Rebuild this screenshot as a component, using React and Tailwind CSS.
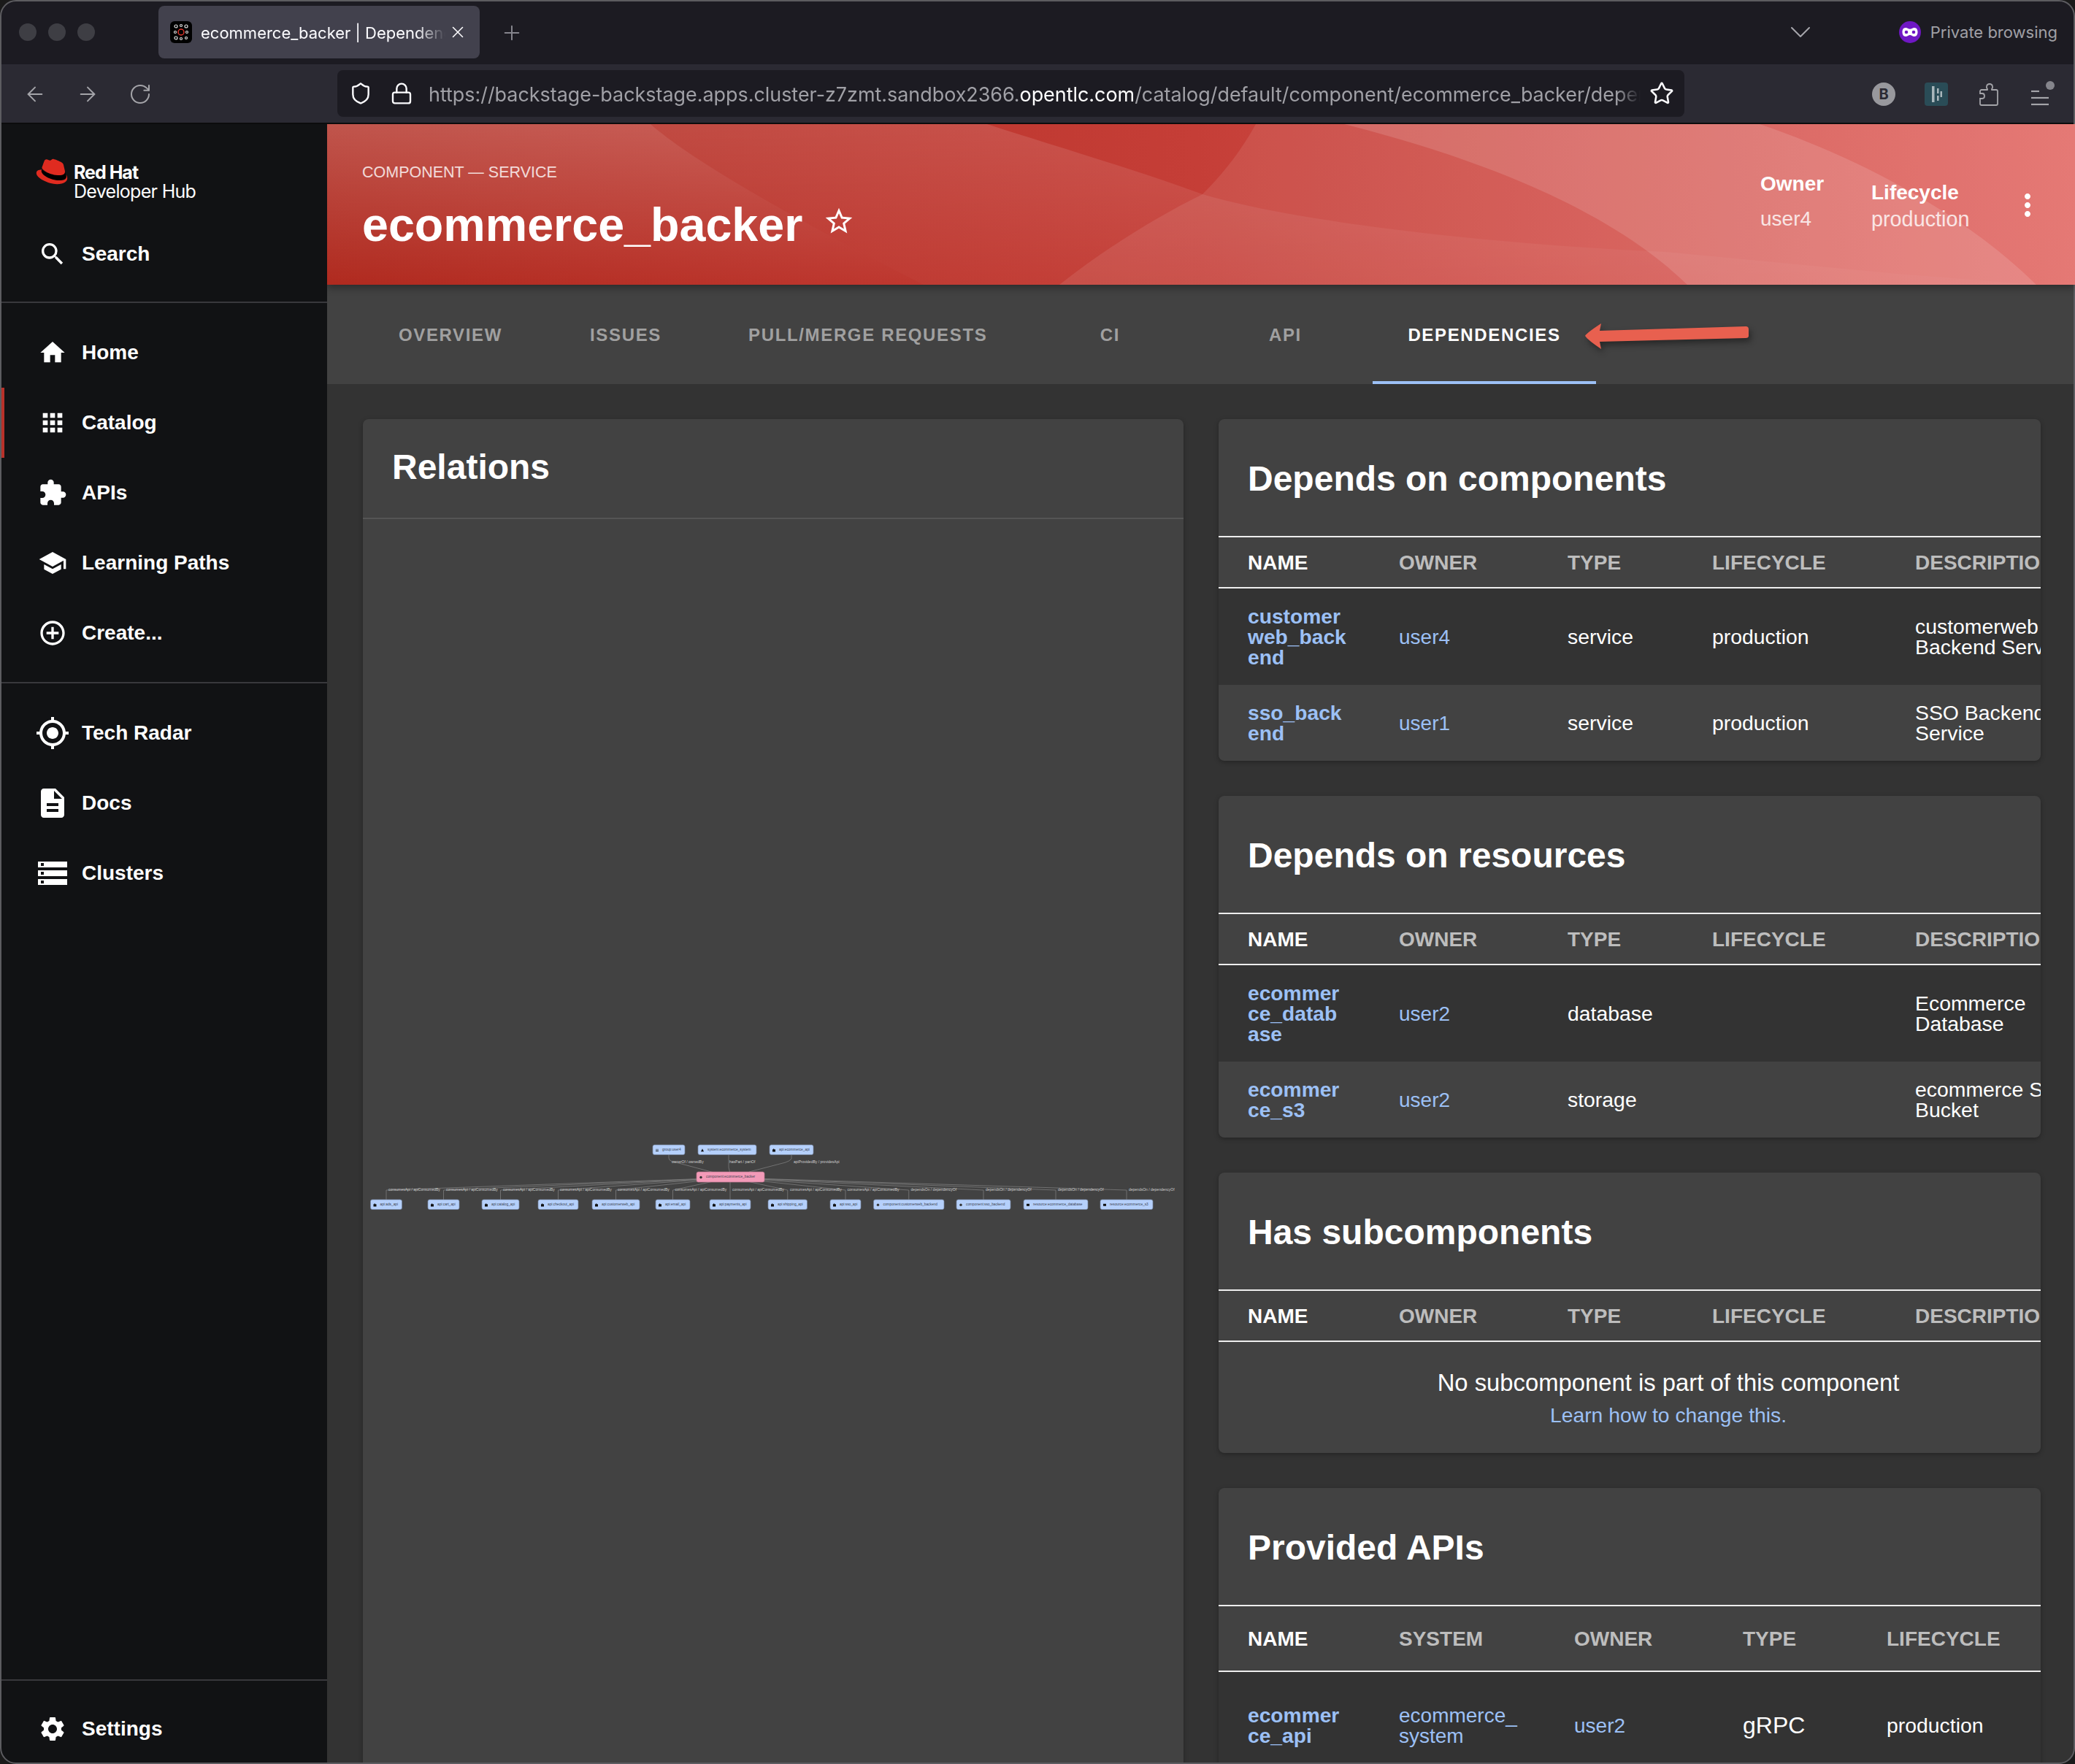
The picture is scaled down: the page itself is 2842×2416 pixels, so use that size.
import { ArrowLeft, ArrowRight, ChevronDown, Lock, Plus, RotateCw, Shield, Star, X } from 'lucide-react';
import {
  MdAddCircleOutline,
  MdApps,
  MdDescription,
  MdExtension,
  MdHome,
  MdMoreVert,
  MdMyLocation,
  MdSchool,
  MdSearch,
  MdSettings,
  MdStarBorder,
  MdStorage,
} from 'react-icons/md';

const mainNav = [
  { label: 'Home', icon: MdHome, size: 40 },
  { label: 'Catalog', icon: MdApps, size: 40, active: true },
  { label: 'APIs', icon: MdExtension, size: 40 },
  { label: 'Learning Paths', icon: MdSchool, size: 40 },
  { label: 'Create...', icon: MdAddCircleOutline, size: 40 },
];

const toolNav = [
  { label: 'Tech Radar', icon: MdMyLocation, size: 48 },
  { label: 'Docs', icon: MdDescription, size: 48 },
  { label: 'Clusters', icon: MdStorage, size: 48 },
];

const tabs = ['OVERVIEW', 'ISSUES', 'PULL/MERGE REQUESTS', 'CI', 'API', 'DEPENDENCIES'];

const componentCols = ['NAME', 'OWNER', 'TYPE', 'LIFECYCLE', 'DESCRIPTION'];
const componentGrid = 'grid grid-cols-[207px_231px_198px_278px_260px] pl-[40px]';
const apiGrid = 'grid grid-cols-[207px_240px_231px_197px_260px] pl-[40px]';

// graph, in page coordinates
const topNodes = [
  { x: 894, w: 44, text: 'group:user4', kind: 'group' },
  { x: 956, w: 80, text: 'system:ecommerce_system', kind: 'system' },
  { x: 1054, w: 60, text: 'api:ecommerce_api', kind: 'api' },
];

const bottomNodes = [
  { x: 507.5, w: 43, text: 'api:ads_api', kind: 'api', lx: 532 },
  { x: 586, w: 43, text: 'api:cart_api', kind: 'api', lx: 611 },
  { x: 660, w: 51, text: 'api:catalog_api', kind: 'api', lx: 689 },
  { x: 737, w: 55, text: 'api:checkout_api', kind: 'api', lx: 767 },
  { x: 811, w: 65, text: 'api:customerweb_api', kind: 'api', lx: 846 },
  { x: 898, w: 47, text: 'api:email_api', kind: 'api', lx: 924.5 },
  { x: 972, w: 56, text: 'api:payments_api', kind: 'api', lx: 1003 },
  { x: 1052, w: 53.5, text: 'api:shipping_api', kind: 'api', lx: 1082 },
  { x: 1137, w: 42, text: 'api:sso_api', kind: 'api', lx: 1160.6 },
  { x: 1196.5, w: 96.5, text: 'component:customerweb_backend', kind: 'component', lx: 1247.6, dep: true },
  { x: 1310, w: 74, text: 'component:sso_backend', kind: 'component', lx: 1350, dep: true },
  { x: 1402, w: 88, text: 'resource:ecommerce_database', kind: 'resource', lx: 1449, dep: true },
  { x: 1507, w: 72, text: 'resource:ecommerce_s3', kind: 'resource', lx: 1546, dep: true },
];

const NavItem = ({ item }) => {
  const Icon = item.icon;
  return (
    <div className="relative flex h-[96px] items-center gap-[16px] pl-[48px]">
      {item.active && <div className="absolute left-[2px] top-0 h-full w-[4px] bg-[#b8312a]" />}
      <div className="flex w-[48px] justify-center">
        <Icon size={item.size} color="#fff" />
      </div>
      <span className="text-[28px] font-bold text-white">{item.label}</span>
    </div>
  );
};

const RedHatLogo = () => (
  <svg width="46" height="36" viewBox="0 0 40 34" className="mt-[-1px] shrink-0">
    <path fill="#000" d="M6.900 14.300c-.3.600-.4 1.200-.4 1.900 0 4.800 10.800 12.100 23.300 12.100 5.500 0 8.700-2.100 8.700-4.800 0-.8-.2-1.500-.5-2.200L37 17c0 3.800-3.700 4.800-7 4.800C16.700 21.800 7.200 14.700 6.900 14.300z" />
    <path fill="#e02b20" d="M30 21.800c3.300 0 7-.9 7-4.800 0-.3 0-.6-.1-.9l-1.800-7.800c-.4-1.600-.8-2.500-4.100-4.100C28.500 2.900 23 .7 21.400.7c-1.500 0-2 2-3.700 2-1.700 0-3-1.500-4.600-1.500-1.600 0-2.600 1-3.300 3.300 0 0-2.200 6.100-2.500 7-.1.200-.1.400-.1.500 0 2.400 9.500 9.800 22.800 9.800zM38.400 20.900c.3 1 .5 1.700.5 2.600 0 3.500-3.700 4.800-9.100 4.800C17.300 28.300 6.500 21 6.500 16.200c0-.7.1-1.300.4-1.900C2.500 14.500 0 15.700 0 19.100 0 25 14.900 33.200 26.800 33.200c9.100 0 13.200-4.100 13.200-7.300 0-2.500-.6-3.800-1.600-5z" />
  </svg>
);

const Sidebar = () => (
  <aside className="flex w-[448px] shrink-0 flex-col bg-[#111214]">
    <div className="h-[245px] border-b-2 border-[#38383c]">
      <div className="flex h-[130px] gap-[7px] pl-[48px] pt-[48px]">
        <RedHatLogo />
        <div className="mt-[5px] font-['Inter',sans-serif] text-white">
          <div className="text-[25px] font-bold leading-[26px] tracking-[-1px]">Red Hat</div>
          <div className="text-[25px] leading-[26px] tracking-[-0.700px]">Developer Hub</div>
        </div>
      </div>
      <NavItem item={{ label: 'Search', icon: MdSearch, size: 40 }} />
    </div>
    <div className="border-b-2 border-[#38383c] pb-[19px] pt-[20px]">
      {mainNav.map((item) => (
        <NavItem key={item.label} item={item} />
      ))}
    </div>
    <div className="flex-1 pt-[20px]">
      {toolNav.map((item) => (
        <NavItem key={item.label} item={item} />
      ))}
    </div>
    <div className="h-[116px] border-t-2 border-[#38383c] pt-[18px]">
      <NavItem item={{ label: 'Settings', icon: MdSettings, size: 40 }} />
    </div>
  </aside>
);

const BrowserChrome = () => (
  <div className="font-['Inter',sans-serif]">
    {/* tab strip */}
    <div className="flex h-[88px] items-center bg-[#1c1b22] text-[#fbfbfe]">
      <div className="flex w-[217px] shrink-0 gap-[16px] pl-[26px]">
        <div className="h-[24px] w-[24px] rounded-full bg-[#3e3e44]" />
        <div className="h-[24px] w-[24px] rounded-full bg-[#3e3e44]" />
        <div className="h-[24px] w-[24px] rounded-full bg-[#3e3e44]" />
      </div>
      <div className="flex h-[72px] w-[440px] items-center rounded-[8px] bg-[#42414d] pl-[16px]">
        <svg width="30" height="30" viewBox="0 0 30 30" className="shrink-0">
          <rect width="30" height="30" rx="6" fill="#000" />
          <circle cx="15" cy="15" r="4" fill="none" stroke="#e0352b" strokeWidth="1.500" />
          <g fill="none" stroke="#ddd" strokeWidth="1.200">
            <circle cx="8" cy="7" r="2" />
            <circle cx="15" cy="6" r="1.500" />
            <circle cx="22" cy="7" r="2" />
            <circle cx="7" cy="15" r="1.500" />
            <circle cx="23" cy="15" r="1.500" />
            <circle cx="8" cy="23" r="2" />
            <circle cx="15" cy="24" r="1.500" />
            <circle cx="22" cy="23" r="1.500" />
          </g>
        </svg>
        <div className="ml-[12px] w-[335px] overflow-hidden whitespace-nowrap pt-[2px] text-[22px] [mask-image:linear-gradient(to_right,black_88%,transparent)]">
          ecommerce_backer | Dependencies
        </div>
        <X size={26} strokeWidth={1.5} className="ml-[4px]" />
      </div>
      <Plus size={32} strokeWidth={1.5} className="ml-[28px] mt-[2px] text-[#85858d]" />
      <div className="flex-1" />
      <ChevronDown size={48} strokeWidth={1} className="mr-[111px] text-[#a5a5ab]" />
      <svg width="30" height="30" viewBox="0 0 30 30" className="shrink-0">
        <circle cx="15" cy="15" r="15" fill="#6f17c4" />
        <path fill="#fff" d="M9 9c2.500 0 4 1.800 6 1.800S18.500 9 21 9c3.300 0 4.500 2.800 4.500 6S24 21 21 21c-2.500 0-4-2-6-2s-3.500 2-6 2c-3 0-4.500-2.800-4.500-6S5.700 9 9 9z" />
        <circle cx="10" cy="15" r="2.300" fill="#6f17c4" />
        <circle cx="20" cy="15" r="2.300" fill="#6f17c4" />
      </svg>
      <span className="ml-[13px] mr-[24px] whitespace-nowrap text-[22px] text-[#a0a0a6]">Private browsing</span>
    </div>
    {/* toolbar */}
    <div className="flex h-[80px] items-center bg-[#2b2a33] text-[#a4a4a9]">
      <div className="flex w-[462px] shrink-0 items-center gap-[40px] pl-[32px] pt-[2px]">
        <ArrowLeft size={32} strokeWidth={1.5} />
        <ArrowRight size={32} strokeWidth={1.5} />
        <RotateCw size={32} strokeWidth={1.5} />
      </div>
      <div className="flex h-[64px] w-[1845px] items-center rounded-[8px] bg-[#1c1b22] pl-[16px] text-[#fbfbfe]">
        <Shield size={32} strokeWidth={1.8} className="shrink-0" />
        <Lock size={32} strokeWidth={1.8} className="ml-[24px] shrink-0" />
        <div className="ml-[21px] w-[1660px] overflow-hidden whitespace-nowrap pt-[2px] text-[26.900px] text-[#a0a0a6] [mask-image:linear-gradient(to_right,black_98%,transparent)]">
          https://backstage-backstage.apps.cluster-z7zmt.sandbox2366.<span className="text-white">opentlc.com</span>/catalog/default/component/ecommerce_backer/dependencies
        </div>
        <Star size={34} strokeWidth={1.8} className="ml-[12px] shrink-0" />
      </div>
      <div className="flex flex-1 items-center justify-end gap-[40px] pr-[26px] pt-[2px]">
        <div className="flex h-[32px] w-[32px] items-center justify-center rounded-full bg-[#98989d] text-[20px] font-bold text-[#2b2a33]">
          B
        </div>
        <svg width="32" height="32" viewBox="0 0 32 32">
          <rect width="32" height="32" rx="4" fill="#2a4c57" />
          <rect x="10" y="5" width="3.500" height="22" fill="#a9b6bb" />
          <rect x="17" y="8" width="2.500" height="7" fill="#a9b6bb" />
          <rect x="17" y="18" width="2.500" height="7" fill="#a9b6bb" />
          <rect x="21.500" y="12" width="2.500" height="8" fill="#a9b6bb" />
        </svg>
        <svg width="32" height="32" viewBox="0 0 26 32" fill="none" stroke="#a4a4a9" strokeWidth="1.800">
          <path d="M3 31H23a2 2 0 0 0 2-2V12a2 2 0 0 0-2-2H17C16 9 19 8 18 5 17 1 11 1 10 5 9 8 12 9 11 10H3a2 2 0 0 0-2 2V15H4C8 15 8 22 4 22H1V29a2 2 0 0 0 2 2Z" />
        </svg>
        <svg width="36" height="36" viewBox="0 0 36 36">
          <circle cx="28" cy="6" r="6" fill="#85858c" />
          <g stroke="#a4a4a9" strokeWidth="2.200">
            <line x1="2" y1="14" x2="13" y2="14" />
            <line x1="2" y1="23" x2="26" y2="23" />
            <line x1="2" y1="32" x2="26" y2="32" />
          </g>
        </svg>
      </div>
    </div>
    <div className="h-[2px] bg-[#0c0c0d]" />
  </div>
);

const EntityHeader = () => (
  <header className="relative z-10 flex h-[220px] justify-between overflow-hidden text-white shadow-[0_4px_10px_rgba(0,0,0,0.35)]">
    <svg className="absolute inset-0 h-full w-full" viewBox="0 0 2394 220" preserveAspectRatio="none">
      <defs>
        <linearGradient id="hdrBase" x1="0" y1="220" x2="2394" y2="60" gradientUnits="userSpaceOnUse">
          <stop offset="0" stopColor="#b02a1f" />
          <stop offset="0.5" stopColor="#c53e37" />
          <stop offset="1" stopColor="#e36c68" />
        </linearGradient>
        <linearGradient id="hdrFade" x1="0" y1="0" x2="0" y2="1">
          <stop offset="0" stopColor="#fff" stopOpacity="0.2" />
          <stop offset="1" stopColor="#fff" stopOpacity="0" />
        </linearGradient>
        <linearGradient id="hdrFade2" x1="0" y1="0" x2="0" y2="1">
          <stop offset="0" stopColor="#fff" stopOpacity="0.12" />
          <stop offset="1" stopColor="#fff" stopOpacity="0.02" />
        </linearGradient>
      </defs>
      <rect width="2394" height="220" fill="url(#hdrBase)" />
      <path d="M0 0H443C500 50 640 130 817 220H0Z" fill="url(#hdrFade)" />
      <path d="M443 0H904C990 28 1100 60 1199 96C1330 135 1600 165 1832 175L2150 205L2340 220H817C640 130 500 50 443 0Z" fill="url(#hdrFade2)" />
      <path d="M1272 0C1250 40 1225 70 1199 96C1130 130 1060 175 1003 220H2394V0Z" fill="#fff" fillOpacity="0.09" />
      <path d="M1393 0C1590 50 1760 120 1863 220H2341C2250 130 2110 50 1962 0Z" fill="#fff" fillOpacity="0.13" />
    </svg>
    <div className="relative pl-[48px] pt-[53px]">
      <div className="text-[21.500px] leading-[26px] text-white/80">COMPONENT — SERVICE</div>
      <div className="mt-[23px] flex items-center gap-[28px]">
        <span className="text-[64.600px] font-bold leading-[72px]">ecommerce_backer</span>
        <MdStarBorder size={44} color="#fff" className="mt-[-10px]" />
      </div>
    </div>
    <div className="relative flex pr-[41px]">
      <div className="w-[152px] pt-[64px]">
        <div className="text-[28px] font-bold leading-[36px]">Owner</div>
        <div className="mt-[12px] text-[28px] leading-[36px] text-white/80">user4</div>
      </div>
      <div className="w-[190px] pt-[76px]">
        <div className="text-[28px] font-bold leading-[36px]">Lifecycle</div>
        <div className="text-[28.800px] leading-[36px] text-white/80">production</div>
      </div>
      <div className="pt-[87px]">
        <MdMoreVert size={48} color="#fff" />
      </div>
    </div>
  </header>
);

const TabBar = () => (
  <nav className="relative flex h-[136px] bg-[#424242] pl-[49px]">
    {tabs.map((tab) => {
      const active = tab === 'DEPENDENCIES';
      return (
        <div
          key={tab}
          className={`flex h-[136px] min-w-[240px] items-center justify-center whitespace-nowrap px-[48px] text-[24px] font-bold tracking-[1.650px] ${
            active ? 'border-b-4 border-[#9cc0f5] pt-[5px] text-white' : 'pt-[1px] text-[#a0a0a0]'
          }`}
        >
          {tab}
        </div>
      );
    })}
    {/* red annotation arrow */}
    <svg
      className="absolute left-[1717px] top-[46px] drop-shadow-[3px_5px_4px_rgba(0,0,0,0.4)]"
      width="240"
      height="50"
      viewBox="0 0 240 50"
    >
      <path
        d="M6 24 Q8 20 28 7 L26 17 L226 11 Q230 11 230 15 L230 24 Q230 27 226 27 L26 32 L28 42 Q10 30 6 24Z"
        fill="#e8604f"
      />
    </svg>
  </nav>
);

const NodeIcon = ({ kind, x, y }) => {
  if (kind === 'component') return <circle cx={x} cy={y} r="1.700" fill="#333" />;
  if (kind === 'resource') return <rect x={x - 2} y={y - 1.5} width="4" height="3" fill="#111" />;
  if (kind === 'group') return <path d={`M${x - 2} ${y + 1.500}h4v-1h-4zM${x - 1.500} ${y - 0.500}h1v-1h-1zM${x + 0.500} ${y - 0.500}h1v-1h-1z`} fill="#111" />;
  if (kind === 'system') return <path d={`M${x} ${y - 2}l2 4h-4z`} fill="#111" />;
  return <path d={`M${x - 2} ${y - 1}h1.200v-1h1v1h1.800v3.300h-4z`} fill="#111" />;
};

const GraphNode = ({ node, y, h, fill = '#b5d0fb', stroke = '#76859f' }) => (
  <g>
    <rect x={node.x} y={y} width={node.w} height={h} rx="2.500" fill={fill} stroke={stroke} strokeWidth="0.700" />
    <NodeIcon kind={node.kind} x={node.x + 6} y={y + h / 2 + 0.500} />
    <text x={node.x + 13} y={y + h / 2 + 0.800} fontSize="4.800" fill="#3a4250">
      {node.text}
    </text>
  </g>
);

const RelationsGraph = () => (
  <svg className="mt-[841px] block font-['Liberation_Sans',sans-serif]" width="1124" height="120" viewBox="497 1552 1124 120">
    <g fill="none" stroke="#7c7c7c" strokeWidth="0.800">
      <path d="M916 1581v5q0 3 4 4.500l60 16" />
      <path d="M998 1581v18l1.500 6" />
      <path d="M1084 1581v6q-2 3-8 5l-50 13" />
      {bottomNodes.map((node) => {
        const cx = node.x + node.w / 2;
        return <path key={node.text} d={`M${cx} 1643V1630L1000 1613`} />;
      })}
    </g>
    <g fontSize="5" fill="#cfcfcf">
      <text x="920" y="1593">ownerOf / ownedBy</text>
      <text x="999" y="1593">hasPart / partOf</text>
      <text x="1087" y="1593">apiProvidedBy / providesApi</text>
      {bottomNodes.map((node) => (
        <text key={node.text} x={node.lx} y="1631">
          {node.dep ? 'dependsOn / dependencyOf' : 'consumesApi / apiConsumedBy'}
        </text>
      ))}
    </g>
    {topNodes.map((node) => (
      <GraphNode key={node.text} node={node} y={1568} h={13.500} />
    ))}
    <GraphNode
      node={{ x: 954, w: 93, text: 'component:ecommerce_backer', kind: 'component' }}
      y={1605}
      h={14}
      fill="#f39ab8"
      stroke="#b8758c"
    />
    {bottomNodes.map((node) => (
      <GraphNode key={node.text} node={node} y={1643} h={13.500} />
    ))}
  </svg>
);

const TableCard = ({ title, children }) => (
  <section className="overflow-hidden rounded-[8px] bg-[#424242] shadow-[0_2px_6px_rgba(0,0,0,0.3)]">
    <h2 className="flex h-[160px] items-center px-[40px] pt-[4px] text-[48px] font-bold text-white">{title}</h2>
    {children}
  </section>
);

const TableHead = ({ cols, grid, tall }) => (
  <div className={`${grid} items-center border-y-2 border-[#eeeeee] pt-[2px] text-[28px] font-bold ${tall ? 'h-[92px]' : 'h-[72px]'}`}>
    {cols.map((col, i) => (
      <div key={col} className={`whitespace-nowrap ${i === 0 ? 'text-white' : 'text-[#bdbdbd]'}`}>
        {col}
      </div>
    ))}
  </div>
);

const NameLink = ({ children }) => (
  <div className="w-[136px] break-all text-[28.200px] font-bold leading-[28px] text-[#9cc0f5]">{children}</div>
);

const ComponentRow = ({ row, dark }) => (
  <div className={`${componentGrid} items-center py-[24px] text-[28.400px] leading-[28px] text-white ${dark ? 'bg-[#333333]' : ''}`}>
    <NameLink>{row.name}</NameLink>
    <div className="pt-[2px] text-[28px] text-[#9cc0f5]">{row.owner}</div>
    <div>{row.type}</div>
    <div>{row.lifecycle}</div>
    <div className="w-[240px]">{row.description}</div>
  </div>
);

const ComponentTable = ({ title, rows }) => (
  <TableCard title={title}>
    <TableHead cols={componentCols} grid={componentGrid} />
    {rows.map((row, i) => (
      <ComponentRow key={row.name} row={row} dark={i % 2 === 0} />
    ))}
  </TableCard>
);

const App = () => (
  <div className="relative flex h-[2416px] w-[2842px] flex-col overflow-hidden bg-[#111214] font-['Liberation_Sans',sans-serif]">
    <BrowserChrome />
    <div className="flex min-h-0 flex-1">
      <Sidebar />
      <main className="flex min-w-0 flex-1 flex-col overflow-hidden bg-[#333333]">
        <EntityHeader />
        <TabBar />
        <div className="grid min-h-0 flex-1 grid-cols-[1124px_1126px] gap-[48px] overflow-hidden pl-[49px] pt-[48px]">
          <section className="h-[2000px] rounded-[8px] bg-[#424242] shadow-[0_2px_6px_rgba(0,0,0,0.3)]">
            <h2 className="flex h-[137px] items-center border-b-2 border-[#555555] px-[40px] pb-[3px] text-[48px] font-bold text-white">
              Relations
            </h2>
            <RelationsGraph />
          </section>
          <div className="flex flex-col gap-[48px]">
            <ComponentTable
              title="Depends on components"
              rows={[
                { name: 'customerweb_backend', owner: 'user4', type: 'service', lifecycle: 'production', description: 'customerweb Backend Service' },
                { name: 'sso_backend', owner: 'user1', type: 'service', lifecycle: 'production', description: 'SSO Backend Service' },
              ]}
            />
            <ComponentTable
              title="Depends on resources"
              rows={[
                { name: 'ecommerce_database', owner: 'user2', type: 'database', lifecycle: '', description: 'Ecommerce Database' },
                { name: 'ecommerce_s3', owner: 'user2', type: 'storage', lifecycle: '', description: 'ecommerce S3 Bucket' },
              ]}
            />
            <TableCard title="Has subcomponents">
              <TableHead cols={componentCols} grid={componentGrid} />
              <div className="h-[152px] w-[1232px] pt-[36px] text-center">
                <div className="text-[32.800px] leading-[40px] text-white">No subcomponent is part of this component</div>
                <div className="mt-[4px] text-[28.300px] leading-[40px] text-[#9cc0f5]">Learn how to change this.</div>
              </div>
            </TableCard>
            <TableCard title="Provided APIs">
              <TableHead cols={['NAME', 'SYSTEM', 'OWNER', 'TYPE', 'LIFECYCLE']} grid={apiGrid} tall />
              <div className={`${apiGrid} items-center bg-[#333333] py-[44px] text-[28.400px] leading-[28px] text-white`}>
                <NameLink>ecommerce_api</NameLink>
                <div className="w-[190px] pt-[2px] text-[28px] text-[#9cc0f5]">
                  ecommerce_<wbr />system
                </div>
                <div className="pt-[2px] text-[28px] text-[#9cc0f5]">user2</div>
                <div className="text-[32px]">gRPC</div>
                <div>production</div>
              </div>
            </TableCard>
          </div>
        </div>
      </main>
    </div>
    {/* window frame */}
    <div className="pointer-events-none absolute inset-0 rounded-[22px] border-2 border-[#5c5c60] shadow-[0_0_0_30px_#1a1a1a]" />
  </div>
);

export default App;
